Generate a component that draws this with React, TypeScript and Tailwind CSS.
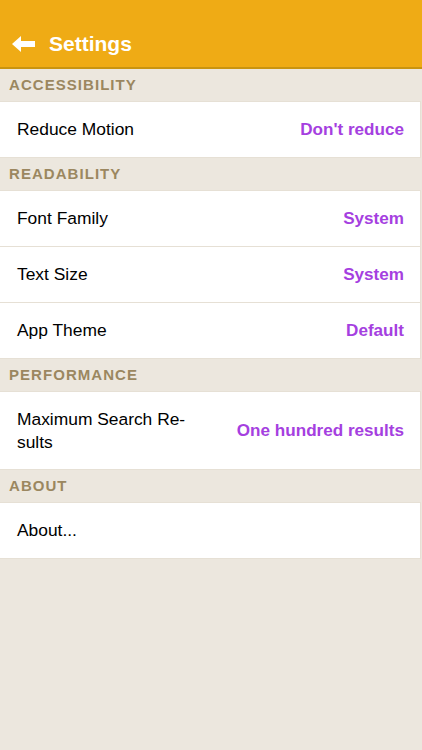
import { ReactNode } from 'react'

type Row = { label: ReactNode; value?: string; tall?: boolean }
type Section = { title: string; rows: Row[] }

const sections: Section[] = [
  { title: 'ACCESSIBILITY', rows: [{ label: 'Reduce Motion', value: "Don't reduce" }] },
  {
    title: 'READABILITY',
    rows: [
      { label: 'Font Family', value: 'System' },
      { label: 'Text Size', value: 'System' },
      { label: 'App Theme', value: 'Default' },
    ],
  },
  {
    title: 'PERFORMANCE',
    rows: [
      {
        label: (
          <>
            Maximum Search Re-
            <br />
            sults
          </>
        ),
        value: 'One hundred results',
        tall: true,
      },
    ],
  },
  { title: 'ABOUT', rows: [{ label: 'About...' }] },
]

function BackArrow() {
  return (
    <svg width="23" height="16" viewBox="0 0 23 16" fill="white" aria-hidden>
      <path d="M0 8 L9 0 L9 5 L23 5 L23 11 L9 11 L9 16 Z" />
    </svg>
  )
}

export default function App() {
  return (
    <div
      className="min-h-[750px] w-[422px] bg-[#ece7de]"
      style={{ fontFamily: 'Helvetica, "Liberation Sans", Arial, sans-serif' }}
    >
      <header className="flex h-[69px] items-center gap-[14px] border-b-2 border-[#c99410] bg-[#efab15] pl-[12px] pt-[20px]">
        <BackArrow />
        <span className="text-[21px] font-bold text-white">Settings</span>
      </header>

      {sections.map((section) => (
        <section key={section.title}>
          <div className="flex h-[32px] items-center pl-[9px] text-[15px] font-bold tracking-[0.07em] text-[#9b8760]">
            {section.title}
          </div>
          <div className="w-[421px] border-r border-t border-[#e6e0d5] bg-white">
            {section.rows.map((row, i) => (
              <div
                key={i}
                className={`flex items-center justify-between border-b border-[#e6e0d5] pl-[17px] pr-[16px] ${
                  row.tall ? 'h-[78px]' : 'h-[56px]'
                }`}
              >
                <span className="text-[17.4px] leading-[23px] text-black">{row.label}</span>
                {row.value && <span className="text-[17.1px] font-bold text-[#a53fe0]">{row.value}</span>}
              </div>
            ))}
          </div>
        </section>
      ))}
    </div>
  )
}
